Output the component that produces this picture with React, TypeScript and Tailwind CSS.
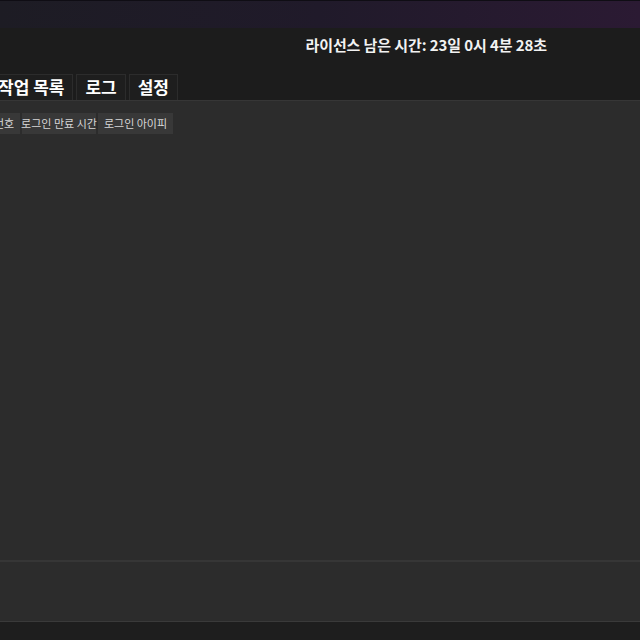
import React from 'react';

const font = { fontFamily: '"Noto Sans CJK KR", "Noto Sans", sans-serif' };

const tabs = ['작업 목록', '로그', '설정'];
const columns = [
  { label: '번호', w: 'w-[32px]' },
  { label: '로그인 만료 시간', w: 'w-[74px]' },
  { label: '로그인 아이피', w: 'w-[75px]' },
];

export default function App() {
  return (
    <div
      className="w-[640px] h-[640px] overflow-hidden bg-[#1c1c1c] flex flex-col text-white"
      style={font}
    >
      {/* title bar */}
      <div className="h-[28px] shrink-0 border-t border-[#0f0d14] bg-gradient-to-r from-[#1d1c24] via-[#201a2a] to-[#2b1a33]" />

      {/* license */}
      <div className="h-[34px] shrink-0 flex items-center justify-end pr-[93px]">
        <span className="text-[15px] font-bold text-[#f2f2f2] tracking-[-0.1px]">
          라이선스 남은 시간: 23일 0시 4분 28초
        </span>
      </div>

      {/* tabs */}
      <div className="mt-[12px] h-[26px] shrink-0 flex gap-[3px] -ml-[11px]">
        {tabs.map((t) => (
          <div
            key={t}
            className="h-[26px] px-[8px] pb-[3px] flex items-center bg-[#1e1e1e] border border-b-0 border-[#2c2c2c] text-[17px] font-bold leading-none text-white"
          >
            {t}
          </div>
        ))}
      </div>

      {/* panel */}
      <div className="flex-1 flex flex-col bg-[#2c2c2c] border-t border-[#363636]">
        <div className="flex-1 pt-[12px]">
          <div className="flex gap-[2px] -ml-[12px]">
            {columns.map((c) => (
              <div
                key={c.label}
                className={`${c.w} h-[21px] flex items-center justify-center bg-[#383838] text-[11px] text-[#d6d6d6] leading-none whitespace-nowrap`}
              >
                {c.label}
              </div>
            ))}
          </div>
        </div>
        <div className="h-[61px] shrink-0 border-t-2 border-[#363636]" />
      </div>

      {/* status */}
      <div className="h-[19px] shrink-0 border-t border-[#3a3a3a] bg-[#1e1e1e]" />
    </div>
  );
}
